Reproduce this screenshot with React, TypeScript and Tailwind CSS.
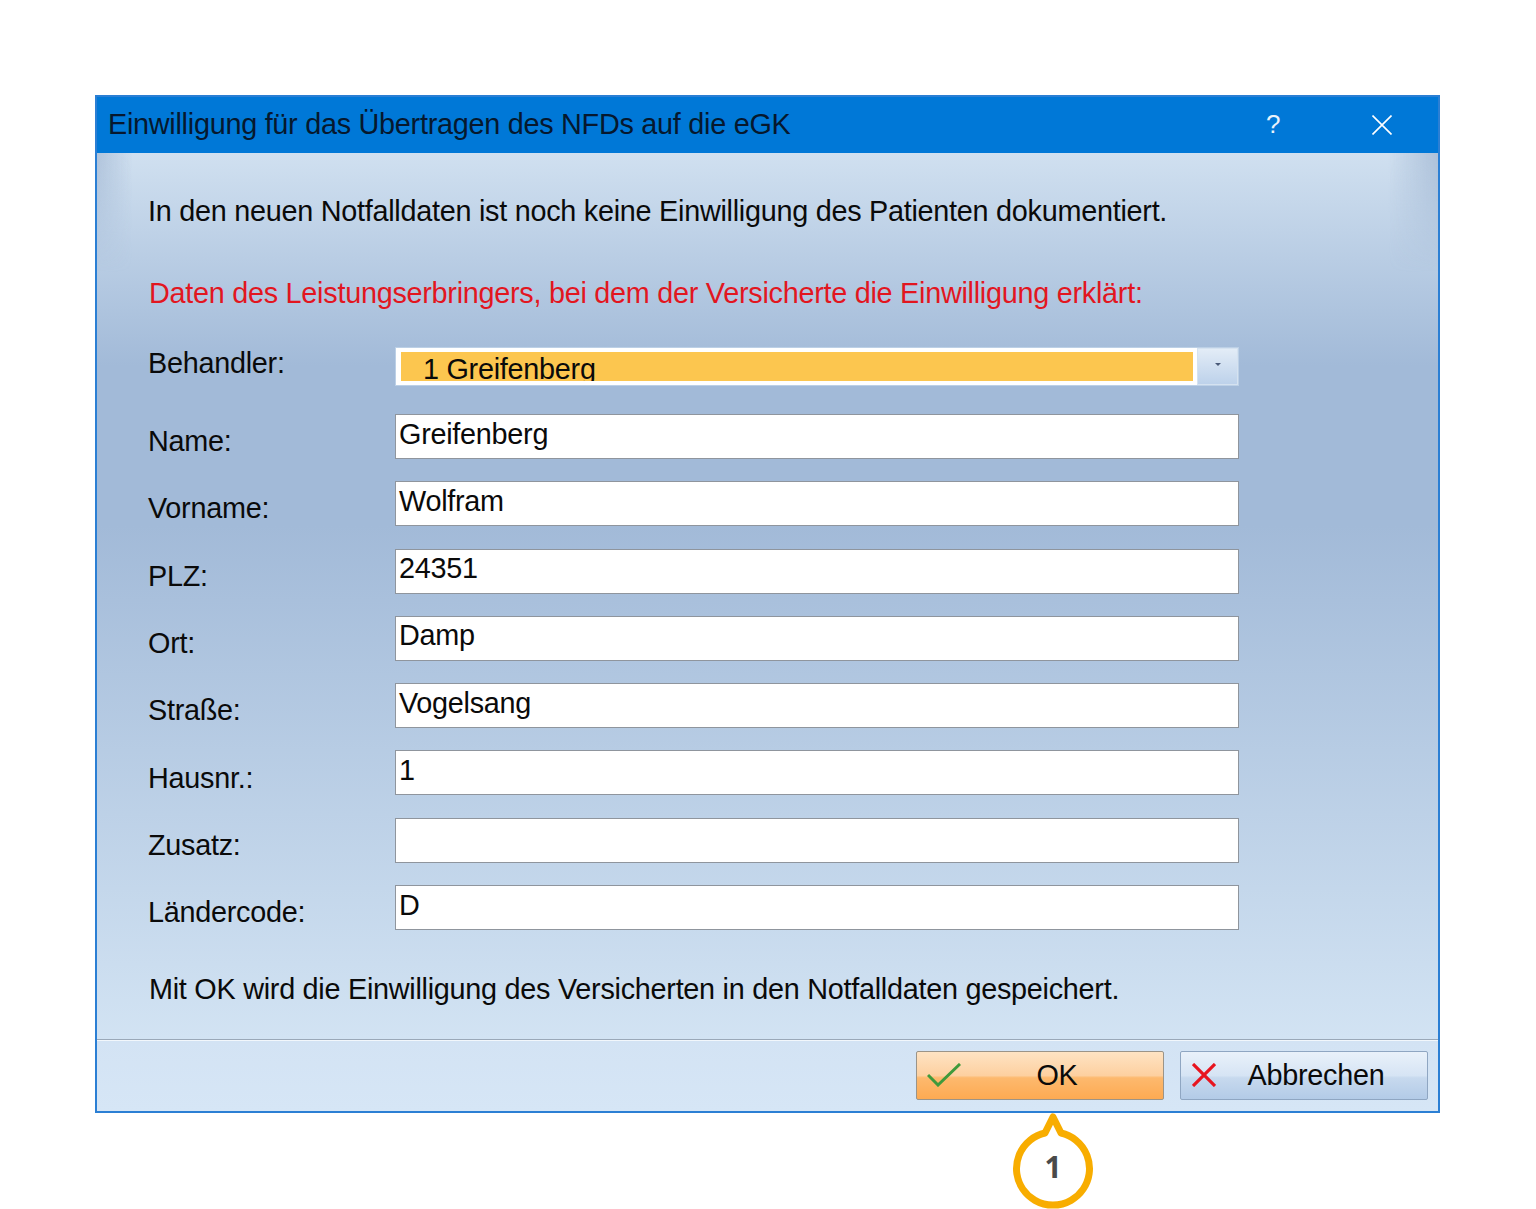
const fields = [
  { label: 'Name:', value: 'Greifenberg' },
  { label: 'Vorname:', value: 'Wolfram' },
  { label: 'PLZ:', value: '24351' },
  { label: 'Ort:', value: 'Damp' },
  { label: 'Straße:', value: 'Vogelsang' },
  { label: 'Hausnr.:', value: '1' },
  { label: 'Zusatz:', value: '' },
  { label: 'Ländercode:', value: 'D' },
];

function Field({ label, value }: { label: string; value: string }) {
  return (
    <div className="flex h-[45px] items-center">
      <span className="w-[247px] translate-y-[5px] leading-none">{label}</span>
      <div className="flex h-[45px] w-[844px] items-center border border-[#8f959d] bg-white pb-[5px] pl-[3px] leading-none">
        {value}
      </div>
    </div>
  );
}

export default function App() {
  return (
    <div className="h-[1209px] overflow-hidden bg-white pl-[95px] pt-[95px] font-['Liberation_Sans',Arial,sans-serif] text-[28.8px] tracking-[-0.265px] text-[#0a0a0a]">
      <div className="w-[1345px] border-2 border-[#2b7fd4]">
        <div className="flex h-[56px] items-center bg-[#0078d7] pb-[1px] pl-[11px] text-[#06182e]">
          <span className="flex-1">Einwilligung für das Übertragen des NFDs auf die eGK</span>
          <span className="w-[106px] text-[26px] text-[#e8f2fb]">?</span>
          <svg viewBox="0 0 20 20" className="mr-[46px] h-[20px] w-[20px]">
            <path d="M0.5 0.5 L19.5 19.5 M19.5 0.5 L0.5 19.5" stroke="#fff" strokeWidth="1.6" fill="none" />
          </svg>
        </div>

        <div className="relative h-[886px] bg-[linear-gradient(to_bottom,#d0e0f0,#a2bad8_24%,#a2bad8_42%,#d2e3f3)] pl-[51px] pt-[41px]">
          {/* darker edge at the upper corners of the panel */}
          <div className="pointer-events-none absolute inset-x-0 top-0 h-[120px] bg-[linear-gradient(to_right,rgba(130,155,190,0.4),transparent_36px,transparent_calc(100%-50px),rgba(130,155,190,0.45))] [mask-image:linear-gradient(to_bottom,black,transparent)]" />
          <p className="relative leading-[34px]">In den neuen Notfalldaten ist noch keine Einwilligung des Patienten dokumentiert.</p>
          <p className="relative ml-[1px] mt-[48px] leading-[34px] text-[#e2161f]">
            Daten des Leistungserbringers, bei dem der Versicherte die Einwilligung erklärt:
          </p>

          <div className="mt-[37px] flex h-[39px] items-start">
            <span className="w-[247px] pt-[2px] leading-none">Behandler:</span>
            <div className="flex h-[39px] w-[844px] border border-[#bcd0e6] bg-white">
              <div className="my-[4px] ml-[5px] mr-[4px] h-[29px] flex-1 overflow-hidden bg-[#fcc64f] pl-[22px] leading-[34px]">
                1 Greifenberg
              </div>
              <div className="flex w-[41px] items-start justify-center bg-gradient-to-b from-[#e4edf7] to-[#bcd1ea] pt-[15px] shadow-[inset_0_0_0_1px_#d5e2f0]">
                <span className="h-0 w-0 border-x-[3px] border-t-[3px] border-x-transparent border-t-[#4a5a78]" />
              </div>
            </div>
          </div>

          <div className="mt-[28px] flex flex-col gap-[22.3px]">
            {fields.map((f) => (
              <Field key={f.label} label={f.label} value={f.value} />
            ))}
          </div>

          <p className="ml-[1px] mt-[42px] leading-[34px]">
            Mit OK wird die Einwilligung des Versicherten in den Notfalldaten gespeichert.
          </p>
        </div>

        <div className="flex h-[72px] justify-end gap-[16px] border-t border-[#9aa8b8] bg-gradient-to-b from-[#d3e3f4] to-[#d6e6f6] pr-[10px] pt-[11px] shadow-[inset_0_1px_0_#f2f7fc]">
          <button className="relative flex h-[49px] w-[248px] items-center justify-center rounded-[2px] border border-[#9b9488] bg-[linear-gradient(to_bottom,#fee3c3,#fdd0a0_50%,#fdb96e_55%,#fdaa52)] pl-[34px]">
            <svg viewBox="0 0 34 24" className="absolute left-[10px] top-[11px] h-[24px] w-[34px]">
              <path d="M1 12 L11 22 L33 1" stroke="#3f9a3c" strokeWidth="3" fill="none" />
            </svg>
            OK
          </button>
          <button className="relative flex h-[49px] w-[248px] items-center justify-center rounded-[2px] border border-[#8fa6c2] bg-[linear-gradient(to_bottom,#e9f1fa,#d6e4f4_50%,#c7d9ee_55%,#b3cbe7)] pl-[24px]">
            <svg viewBox="0 0 24 24" className="absolute left-[11px] top-[11px] h-[24px] w-[24px]">
              <path d="M1 1 L23 23 M23 1 L1 23" stroke="#e8141e" strokeWidth="3.2" fill="none" />
            </svg>
            Abbrechen
          </button>
        </div>
      </div>

      <div className="relative ml-[916px] h-[99px] w-[84px]">
        <svg viewBox="0 0 84 99" className="absolute -top-[1px] left-0 h-[99px] w-[84px]">
          <path
            d="M42 5 L50 21 A36.5 36.5 0 1 1 34 21 Z"
            fill="#fff"
            stroke="#f8ad00"
            strokeWidth="7"
            strokeLinejoin="round"
          />
        </svg>
        <span className="absolute left-0 top-[39px] w-[84px] text-center font-['Open_Sans',sans-serif] text-[30px] font-bold leading-none text-[#4a4a4a]">
          1
        </span>
      </div>
    </div>
  );
}
